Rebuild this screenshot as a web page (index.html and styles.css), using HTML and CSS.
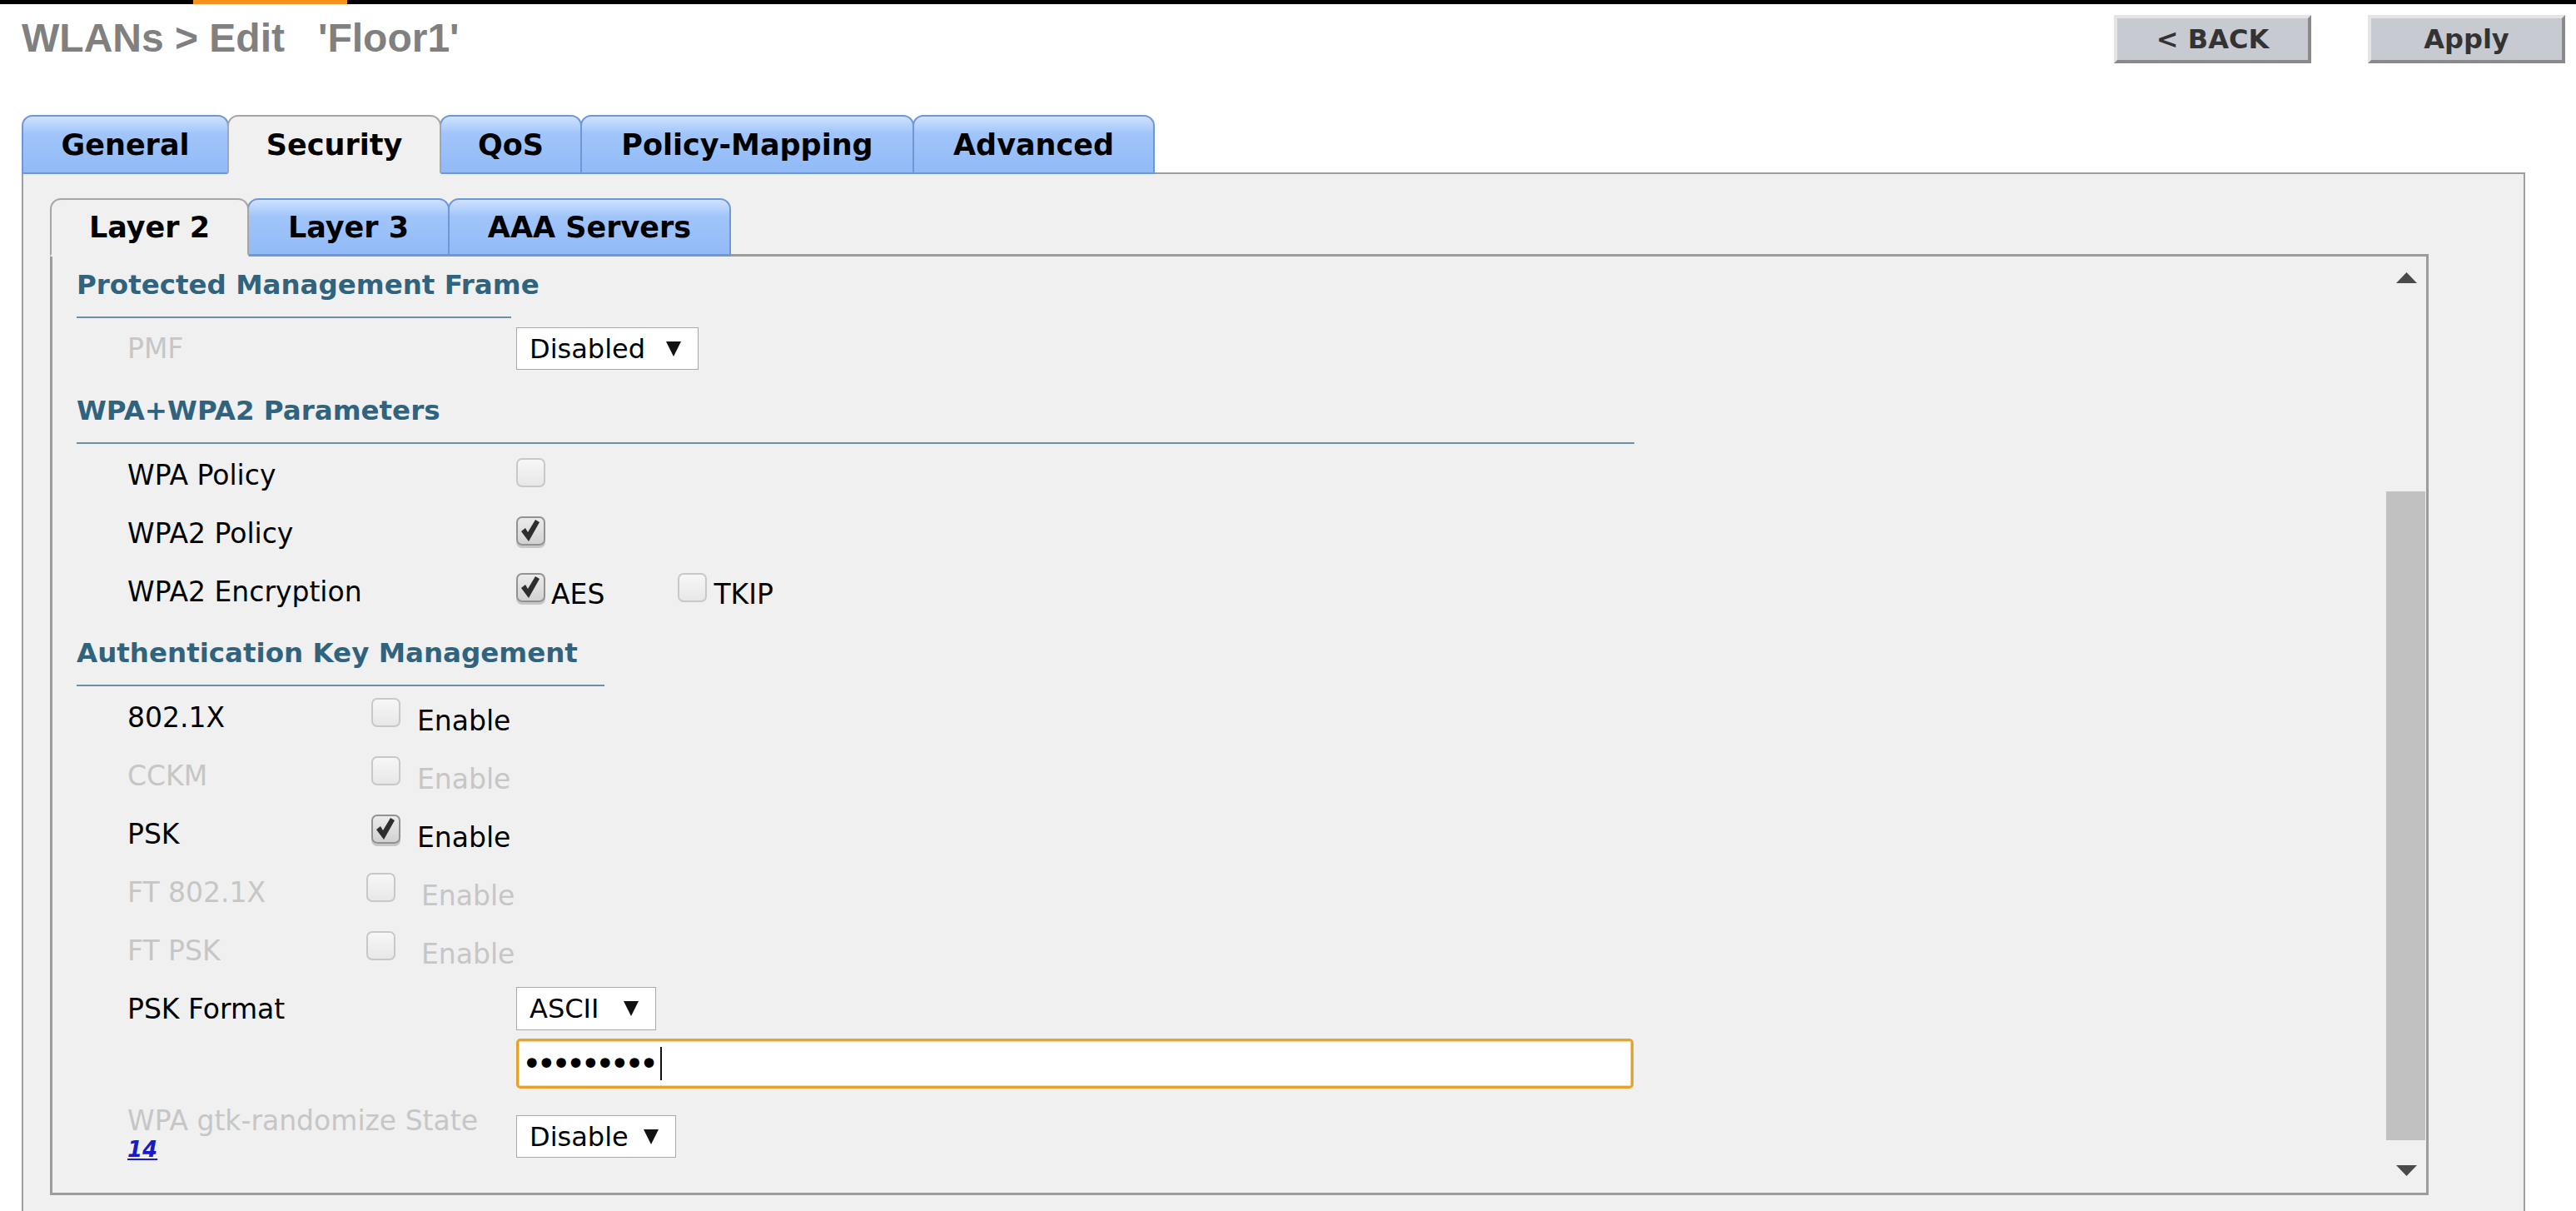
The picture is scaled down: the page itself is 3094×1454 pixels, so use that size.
FILE: index.html
```html
<!DOCTYPE html>
<html lang="en">
<head>
<meta charset="utf-8">
<title>WLANs &gt; Edit</title>
<link rel="stylesheet" href="styles.css">
</head>
<body>
<div class="topbar"><div class="topbar-accent"></div></div>
<header class="header">
  <h1 class="title">WLANs &gt; Edit&nbsp;&nbsp;&nbsp;'Floor1'</h1>
  <div class="actions">
    <button class="btn" type="button">&lt; BACK</button>
    <button class="btn" type="button">Apply</button>
  </div>
</header>
<main class="main">
  <nav class="tabs tabs-main">
    <span class="tab">General</span>
    <span class="tab active">Security</span>
    <span class="tab">QoS</span>
    <span class="tab">Policy-Mapping</span>
    <span class="tab">Advanced</span>
  </nav>
  <section class="panel">
    <nav class="tabs tabs-sub">
      <span class="tab active">Layer 2</span>
      <span class="tab">Layer 3</span>
      <span class="tab">AAA Servers</span>
    </nav>
    <div class="subpanel">
      <div class="form">
        <div class="sec-head sec-pmf">Protected Management Frame</div>
        <div class="row row-mid">
          <span class="lbl dis">PMF</span>
          <span class="select sel-pmf"><span>Disabled</span><svg class="caret" width="18" height="20" viewBox="0 0 18 20"><polygon points="0,1 18,1 9,19" fill="#111"/></svg></span>
        </div>

        <div class="sec-head sec-wpa">WPA+WPA2 Parameters</div>
        <div class="row">
          <span class="lbl">WPA Policy</span>
          <span class="cb"></span>
        </div>
        <div class="row">
          <span class="lbl">WPA2 Policy</span>
          <span class="cb on"><svg width="31" height="31" viewBox="0 0 31 31"><polygon points="4,16 9,12 12,17 21,2 26,5 13,28" fill="#2e2e2e"/></svg></span>
        </div>
        <div class="row">
          <span class="lbl">WPA2 Encryption</span>
          <span class="opt"><span class="cb on enc"><svg width="31" height="31" viewBox="0 0 31 31"><polygon points="4,16 9,12 12,17 21,2 26,5 13,28" fill="#2e2e2e"/></svg></span><span class="opt-text">AES</span></span>
          <span class="opt opt-tkip"><span class="cb enc"></span><span class="opt-text">TKIP</span></span>
        </div>

        <div class="sec-head sec-akm">Authentication Key Management</div>
        <div class="row">
          <span class="lbl lbl-akm">802.1X</span>
          <span class="cb cb-akm"></span>
          <span class="en">Enable</span>
        </div>
        <div class="row">
          <span class="lbl lbl-akm dis">CCKM</span>
          <span class="cb cb-akm"></span>
          <span class="en dis">Enable</span>
        </div>
        <div class="row">
          <span class="lbl lbl-akm">PSK</span>
          <span class="cb cb-akm on"><svg width="31" height="31" viewBox="0 0 31 31"><polygon points="4,16 9,12 12,17 21,2 26,5 13,28" fill="#2e2e2e"/></svg></span>
          <span class="en">Enable</span>
        </div>
        <div class="row">
          <span class="lbl lbl-ft dis">FT 802.1X</span>
          <span class="cb cb-akm"></span>
          <span class="en en-ft dis">Enable</span>
        </div>
        <div class="row">
          <span class="lbl lbl-ft dis">FT PSK</span>
          <span class="cb cb-akm"></span>
          <span class="en en-ft dis">Enable</span>
        </div>

        <div class="row row-psk">
          <span class="lbl">PSK Format</span>
          <div class="stack">
            <span class="select sel-fmt"><span>ASCII</span><svg class="caret" width="18" height="20" viewBox="0 0 18 20"><polygon points="0,1 18,1 9,19" fill="#111"/></svg></span>
            <div class="pw"><span class="dots">•••••••••</span><span class="text-caret"></span></div>
          </div>
        </div>

        <div class="row row-gtk">
          <span class="lbl lbl-gtk"><span class="dis">WPA gtk-randomize State</span><a class="ref" href="#">14</a></span>
          <span class="select sel-gtk"><span>Disable</span><svg class="caret" width="18" height="20" viewBox="0 0 18 20"><polygon points="0,1 18,1 9,19" fill="#111"/></svg></span>
        </div>
      </div>
      <div class="scrollbar">
        <div class="sb-btn sb-up"><svg width="25" height="13" viewBox="0 0 25 13"><polygon points="12.5,0 25,13 0,13" fill="#4a4a4a"/></svg></div>
        <div class="sb-track"><div class="sb-thumb"></div></div>
        <div class="sb-btn sb-down"><svg width="25" height="13" viewBox="0 0 25 13"><polygon points="0,0 25,0 12.5,13" fill="#4a4a4a"/></svg></div>
      </div>
    </div>
  </section>
</main>
</body>
</html>
```
FILE: styles.css
```css
html, body {
  margin: 0;
  padding: 0;
  background: #ffffff;
}
body {
  font-family: "DejaVu Sans", Verdana, sans-serif;
  color: #000;
}

.topbar {
  height: 5px;
  background: #000;
}
.topbar-accent {
  margin-left: 232px;
  width: 185px;
  height: 5px;
  background: #f7931e;
}

.header {
  display: flex;
  justify-content: space-between;
  align-items: flex-start;
  box-sizing: border-box;
  height: 133px;
  padding: 13px 13px 0 26px;
}
.title {
  margin: 0;
  font-family: "Liberation Sans", Arial, sans-serif;
  font-weight: bold;
  font-size: 48px;
  line-height: 56px;
  color: #808080;
  white-space: nowrap;
}
.actions {
  display: flex;
  gap: 68px;
}
.btn {
  box-sizing: border-box;
  width: 237px;
  height: 58px;
  padding: 0;
  font-family: "DejaVu Sans", Verdana, sans-serif;
  font-weight: bold;
  font-size: 32px;
  color: #333;
  background: #c8cad2;
  border: 4px solid;
  border-color: #e4e4e4 #8a8a8a #8a8a8a #e4e4e4;
}

.main {
  margin: 0 61px 0 26px;
}

.tabs {
  display: grid;
  position: relative;
  z-index: 1;
}
.tabs-main {
  grid-template-columns: 247px 255px 169px 399px 289px;
  height: 71px;
  margin-bottom: -2px;
}
.tabs-sub {
  grid-template-columns: 237px 241px 338px;
  height: 70px;
  margin-bottom: -3px;
}
.tab {
  position: relative;
  box-sizing: border-box;
  display: flex;
  align-items: center;
  justify-content: center;
  margin-right: -2px;
  border: 2px solid #6f97d5;
  border-radius: 13px 13px 0 0;
  background: linear-gradient(#cfe2fe, #a1c5fa 30%, #91baf7);
  font-weight: bold;
  font-size: 35px;
  color: #000;
  white-space: nowrap;
}
.tabs-sub .tab {
  border-bottom-width: 3px;
}
.tab.active {
  z-index: 2;
  background: #f0f0f0;
  border-color: #a6a6a6;
  border-bottom-color: #f0f0f0;
}

.panel {
  background: #f0f0f0;
  border: 2px solid #9e9e9e;
  padding: 29px 114px 60px 32px;
}
.subpanel {
  display: flex;
  box-sizing: border-box;
  height: 1130px;
  border: 3px solid #9c9c9c;
  background: #f0f0f0;
}
.form {
  flex: 1;
  min-width: 0;
  overflow: hidden;
  font-size: 33px;
  line-height: 38px;
}

.sec-head {
  margin-left: 29px;
  font-weight: bold;
  font-size: 32.5px;
  color: #30637e;
  border-bottom: 2px solid #6b8fa5;
  padding-bottom: 19px;
  white-space: nowrap;
}
.sec-pmf { width: 522px; padding-top: 15px; }
.sec-wpa { width: 1871px; padding-top: 19px; }
.sec-akm { width: 634px; padding-top: 22px; }

.row {
  display: flex;
  align-items: flex-start;
  height: 70px;
  padding-left: 90px;
}
.row-mid {
  height: 73px;
  align-items: center;
}
.lbl {
  flex: none;
  width: 467px;
  margin-top: 19px;
  white-space: nowrap;
}
.row-mid .lbl { margin-top: 0; }
.dis { color: #c6c6c6; }

.cb {
  flex: none;
  box-sizing: border-box;
  width: 35px;
  height: 35px;
  margin-top: 17px;
  border: 2px solid #c8c8c8;
  border-radius: 7px;
  background: linear-gradient(#f7f7f7, #e7e7e7);
  display: flex;
  align-items: center;
  justify-content: center;
}
.cb.on {
  border-color: #929292;
  background: linear-gradient(#ebebeb, #d2d2d2);
  box-shadow: 0 3px 0 #c6c6c6;
}

.opt {
  display: flex;
  align-items: flex-start;
}
.cb.enc { margin-top: 15px; }
.opt-text {
  margin: 22px 0 0 7px;
}
.opt-tkip { margin-left: 88px; }
.opt-tkip .opt-text { margin-left: 8px; }

.lbl-akm { width: 293px; margin-top: 18.5px; }
.lbl-ft { width: 287px; margin-top: 18.5px; }
.cb-akm { margin-top: 14px; }
.en { margin: 23px 0 0 20px; }
.en-ft { margin-left: 31px; }

.select {
  display: flex;
  align-items: center;
  justify-content: space-between;
  box-sizing: border-box;
  height: 51px;
  padding: 0 20px 0 15px;
  background: #fff;
  border: 1px solid #a9a9a9;
  white-space: nowrap;
  font-size: 32px;
}
.sel-pmf { width: 219px; }
.sel-fmt { width: 168px; height: 52px; }
.sel-gtk { width: 192px; margin-top: 32px; }

.row-psk { height: auto; }
.stack {
  display: flex;
  flex-direction: column;
  align-items: flex-start;
  gap: 10px;
  padding-top: 11px;
}
.pw {
  display: flex;
  align-items: center;
  box-sizing: border-box;
  width: 1342px;
  height: 60px;
  padding-left: 4px;
  background: #fff;
  border: 3px solid #e5a22c;
  border-radius: 5px;
  box-shadow: inset 0 0 0 1px #f6d9a0;
}
.dots {
  font-size: 40px;
  letter-spacing: -6px;
  line-height: 40px;
  color: #000;
}
.text-caret {
  width: 2px;
  height: 40px;
  margin-left: 8px;
  background: #111;
}

.row-gtk { height: auto; }
.lbl-gtk {
  display: flex;
  flex-direction: column;
  align-items: flex-start;
  margin-top: 20px;
}
.ref {
  font-size: 26px;
  line-height: 30px;
  font-weight: bold;
  font-style: italic;
  color: #1a1acc;
  text-decoration: underline;
}

.scrollbar {
  flex: none;
  width: 48px;
  display: flex;
  flex-direction: column;
}
.sb-btn {
  box-sizing: border-box;
  height: 47px;
  display: flex;
  align-items: center;
  justify-content: center;
}
.sb-up { padding-top: 4px; }
.sb-down { padding-bottom: 6px; }
.sb-track { flex: 1; }
.sb-thumb {
  margin-top: 235px;
  width: 47px;
  height: 779px;
  background: #c1c1c1;
}
```
